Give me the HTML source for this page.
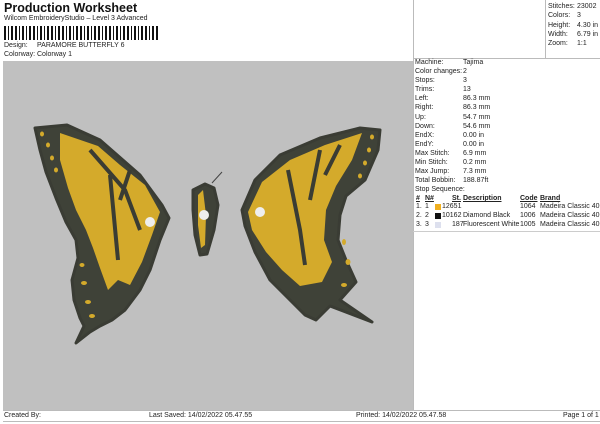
<!DOCTYPE html>
<html><head><meta charset="utf-8"><style>
*{margin:0;padding:0;box-sizing:border-box}
body{width:600px;height:424px;background:#fff;font-family:"Liberation Sans",sans-serif;color:#222;position:relative;overflow:hidden;font-size:7px}
.a{position:absolute;white-space:nowrap}
u{text-decoration:underline}
.t{position:absolute;white-space:nowrap}
</style></head><body>
<div class="a" style="left:4px;top:1px;font-size:12.5px;font-weight:bold;color:#111">Production Worksheet</div>
<div class="a" style="left:4px;top:15px;font-size:7px">Wilcom EmbroideryStudio – Level 3 Advanced</div>
<svg class="a" style="left:4px;top:26px" width="156" height="14">
<g fill="#111">
<rect x="0" width="2" height="14"/><rect x="4" width="1" height="14"/><rect x="7" width="2" height="14"/><rect x="11" width="2" height="14"/><rect x="15" width="1" height="14"/><rect x="18" width="2" height="14"/><rect x="22" width="1" height="14"/><rect x="25" width="2" height="14"/><rect x="29" width="2" height="14"/><rect x="33" width="1" height="14"/><rect x="36" width="2" height="14"/><rect x="40" width="1" height="14"/><rect x="43" width="2" height="14"/><rect x="47" width="2" height="14"/><rect x="51" width="1" height="14"/><rect x="54" width="2" height="14"/><rect x="58" width="2" height="14"/><rect x="62" width="1" height="14"/><rect x="65" width="2" height="14"/><rect x="69" width="1" height="14"/><rect x="72" width="2" height="14"/><rect x="76" width="2" height="14"/><rect x="80" width="1" height="14"/><rect x="83" width="2" height="14"/><rect x="87" width="1" height="14"/><rect x="90" width="2" height="14"/><rect x="94" width="2" height="14"/><rect x="98" width="1" height="14"/><rect x="101" width="2" height="14"/><rect x="105" width="2" height="14"/><rect x="109" width="1" height="14"/><rect x="112" width="2" height="14"/><rect x="116" width="1" height="14"/><rect x="119" width="2" height="14"/><rect x="123" width="2" height="14"/><rect x="127" width="1" height="14"/><rect x="130" width="2" height="14"/><rect x="134" width="1" height="14"/><rect x="137" width="2" height="14"/><rect x="141" width="2" height="14"/><rect x="145" width="1" height="14"/><rect x="148" width="2" height="14"/><rect x="152" width="2" height="14"/>
</g></svg>
<div class="a" style="left:4px;top:42px">Design:</div><div class="a" style="left:37px;top:42px">PARAMORE BUTTERFLY 6</div>
<div class="a" style="left:4px;top:51px">Colorway:</div><div class="a" style="left:37px;top:51px">Colorway 1</div>

<div class="a" style="left:3px;top:61px;width:410px;height:349px;background:#c0c0c0"></div>
<svg class="a" style="left:0;top:0" width="412" height="410">
<g stroke="#3a3c34" stroke-width="3" stroke-linejoin="round">
<path fill="#3f4238" d="M35,128 L67,125 L100,140 L140,175 L162,205 L169,218 L160,240 L150,270 L140,290 L125,310 L112,320 L100,326 L90,332 L76,343 L84,326 L80,318 L74,300 L72,280 L78,258 L76,240 L66,222 L56,198 L46,172 L40,150 Z"/>
<path fill="#d4aa2b" stroke="none" d="M60,133 L98,146 L120,165 L145,185 L160,212 L152,235 L142,262 L130,285 L118,280 L108,290 L100,268 L93,248 L86,230 L76,210 L68,188 L60,160 Z"/>
<path fill="#3f4238" d="M242,210 L255,180 L280,155 L320,138 L360,128 L380,130 L378,150 L365,180 L346,196 L340,215 L338,240 L346,260 L356,282 L340,300 L372,322 L330,306 L316,320 L305,315 L290,300 L270,280 L255,252 L245,226 Z"/>
<path fill="#d4aa2b" stroke="none" d="M248,212 L262,182 L290,160 L325,145 L362,133 L352,160 L336,186 L326,210 L324,240 L332,262 L322,282 L300,286 L282,270 L266,252 L252,230 Z"/>
<path fill="#3f4238" d="M193,190 L205,184 L214,188 L218,205 L214,230 L207,254 L200,255 L195,235 L193,210 Z"/>
<path fill="#d4aa2b" stroke="none" d="M198,195 L203,190 L206,215 L205,245 L201,248 L198,225 Z"/>
</g>
<g stroke="#3a3c34" stroke-width="4" fill="none">
<path d="M90,150 L125,190 L140,230"/><path d="M110,175 L118,260"/><path d="M288,170 L300,230 L305,265"/><path d="M320,150 L310,200"/>
<path d="M130,170 L120,200"/><path d="M340,145 L325,175"/>
</g>
<g fill="#d4aa2b">
<ellipse cx="42" cy="134" rx="2" ry="2.5"/><ellipse cx="48" cy="145" rx="2" ry="2.5"/><ellipse cx="52" cy="158" rx="2" ry="2.5"/><ellipse cx="56" cy="170" rx="2" ry="2.5"/>
<ellipse cx="82" cy="265" rx="2.5" ry="2"/><ellipse cx="84" cy="283" rx="3" ry="2"/><ellipse cx="88" cy="302" rx="3" ry="2"/><ellipse cx="92" cy="316" rx="3" ry="2"/>
<ellipse cx="372" cy="137" rx="2" ry="2.5"/><ellipse cx="369" cy="150" rx="2" ry="2.5"/><ellipse cx="365" cy="163" rx="2" ry="2.5"/><ellipse cx="360" cy="176" rx="2" ry="2.5"/>
<ellipse cx="344" cy="242" rx="2" ry="3"/><ellipse cx="348" cy="262" rx="2.5" ry="3"/><ellipse cx="344" cy="285" rx="3" ry="2"/>
</g>
<path d="M212,183 L222,172" stroke="#444" fill="none"/>
<circle cx="150" cy="222" r="5" fill="#eee"/><circle cx="260" cy="212" r="5" fill="#eee"/><circle cx="204" cy="215" r="5" fill="#eee"/>
</svg>

<div class="a" style="left:413px;top:0;width:1px;height:410px;background:#bbb"></div>
<div class="a" style="left:413px;top:58px;width:187px;height:1px;background:#bbb"></div>
<div class="a" style="left:545px;top:0;width:1px;height:58px;background:#bbb"></div>
<div class="a" style="left:548px;top:2px;line-height:9.3px">Stitches:<br>Colors:<br>Height:<br>Width:<br>Zoom:</div>
<div class="a" style="left:577px;top:2px;line-height:9.3px">23002<br>3<br>4.30 in<br>6.79 in<br>1:1</div>

<div class="a" style="left:415px;top:58px;line-height:9.1px">Machine:<br>Color changes:<br>Stops:<br>Trims:<br>Left:<br>Right:<br>Up:<br>Down:<br>EndX:<br>EndY:<br>Max Stitch:<br>Min Stitch:<br>Max Jump:<br>Total Bobbin:<br>Stop Sequence:</div>
<div class="a" style="left:463px;top:58px;line-height:9.1px">Tajima<br>2<br>3<br>13<br>86.3 mm<br>86.3 mm<br>54.7 mm<br>54.6 mm<br>0.00 in<br>0.00 in<br>6.9 mm<br>0.2 mm<br>7.3 mm<br>188.87ft</div>

<div class="a" style="left:0;top:195px;font-weight:bold">
<u class="t" style="left:416px">#</u><u class="t" style="left:425px">N#</u><u class="t" style="left:452px">St.</u><u class="t" style="left:463px">Description</u><u class="t" style="left:520px">Code</u><u class="t" style="left:540px">Brand</u></div>
<div class="a" style="left:0;top:203px">
<span class="t" style="left:416px">1.</span><span class="t" style="left:425px">1</span><i class="t" style="left:435px;top:1px;width:6px;height:6px;background:#f0b020"></i><span class="t" style="left:442px">12651</span><span class="t" style="left:520px">1064</span><span class="t" style="left:540px">Madeira Classic 40</span></div>
<div class="a" style="left:0;top:212px">
<span class="t" style="left:416px">2.</span><span class="t" style="left:425px">2</span><i class="t" style="left:435px;top:1px;width:6px;height:6px;background:#111"></i><span class="t" style="left:442px">10162</span><span class="t" style="left:463px">Diamond Black</span><span class="t" style="left:520px">1006</span><span class="t" style="left:540px">Madeira Classic 40</span></div>
<div class="a" style="left:0;top:221px">
<span class="t" style="left:416px">3.</span><span class="t" style="left:425px">3</span><i class="t" style="left:435px;top:1px;width:6px;height:6px;background:#dde0ee"></i><span class="t" style="left:452px">187</span><span class="t" style="left:463px">Fluorescent White</span><span class="t" style="left:520px">1005</span><span class="t" style="left:540px">Madeira Classic 40</span></div>
<div class="a" style="left:413px;top:231px;width:187px;height:1px;background:#ccc"></div>

<div class="a" style="left:3px;top:410px;width:597px;height:1px;background:#bbb"></div>
<div class="a" style="left:3px;top:421px;width:597px;height:1px;background:#bbb"></div>
<div class="a" style="left:4px;top:412px">Created By:</div>
<div class="a" style="left:149px;top:412px">Last Saved: 14/02/2022 05.47.55</div>
<div class="a" style="left:356px;top:412px">Printed: 14/02/2022 05.47.58</div>
<div class="a" style="left:563px;top:412px">Page 1 of 1</div>
</body></html>
